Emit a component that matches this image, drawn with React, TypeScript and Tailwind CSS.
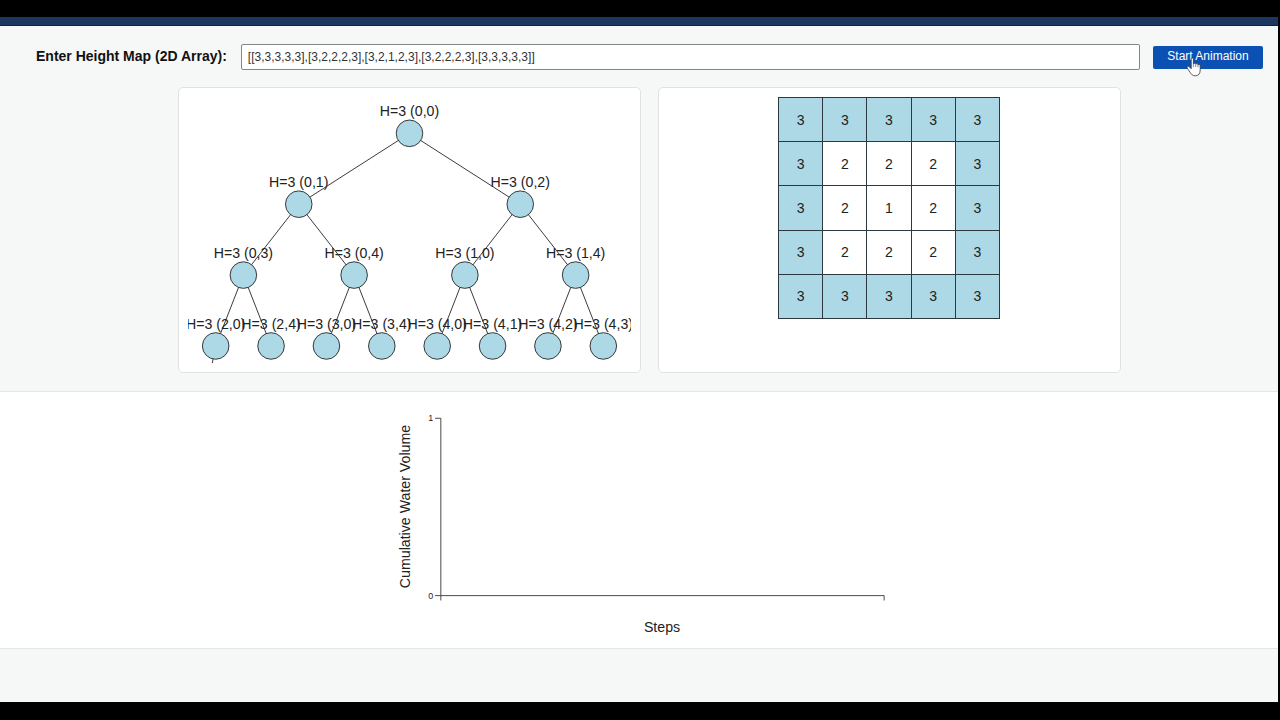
const heights = [
  [3, 3, 3, 3, 3],
  [3, 2, 2, 2, 3],
  [3, 2, 1, 2, 3],
  [3, 2, 2, 2, 3],
  [3, 3, 3, 3, 3],
];

// Border cells in the order in which they sit in the heap array.
const heap = [
  "0,0", "0,1", "0,2", "0,3", "0,4", "1,0", "1,4", "2,0",
  "2,4", "3,0", "3,4", "4,0", "4,1", "4,2", "4,3", "4,4",
];

const TREE_WIDTH = 500;

function nodePosition(index: number) {
  const level = Math.floor(Math.log2(index + 1));
  const slot = index + 1 - 2 ** level;
  return {
    x: (TREE_WIDTH / 2 ** (level + 1)) * (2 * slot + 1),
    y: 41 + level * 80,
  };
}

function HeapTree() {
  const nodes = heap.map((cell, index) => ({ cell, ...nodePosition(index) }));
  return (
    <svg viewBox="0 0 500 300" className="block w-full" role="img" aria-label="Heap">
      {nodes.slice(1).map((node, i) => {
        const parent = nodes[Math.floor(i / 2)];
        return (
          <line key={node.cell} x1={parent.x} y1={parent.y} x2={node.x} y2={node.y} stroke="#222" />
        );
      })}
      {nodes.map((node) => (
        <g key={node.cell}>
          <circle cx={node.x} cy={node.y} r={15} fill="#add8e6" stroke="#222" />
          {node.y < 300 && (
            <text x={node.x} y={node.y - 19} textAnchor="middle" fontSize={16} fill="#222">
              {`H=3 (${node.cell})`}
            </text>
          )}
        </g>
      ))}
    </svg>
  );
}

function HeightGrid() {
  return (
    <table className="mx-auto h-[222px] w-[222px] table-fixed border-collapse text-center text-sm text-[#222]">
      <tbody>
        {heights.map((row, r) => (
          <tr key={r}>
            {row.map((h, c) => {
              const edge = r === 0 || c === 0 || r === heights.length - 1 || c === row.length - 1;
              return (
                <td
                  key={c}
                  className={edge ? "border border-[#2c3a40] bg-[#add8e6] p-0" : "border border-[#2c3a40] bg-white p-0"}
                >
                  {h}
                </td>
              );
            })}
          </tr>
        ))}
      </tbody>
    </table>
  );
}

function VolumeChart() {
  return (
    <svg viewBox="0 0 600 270" className="mx-auto block w-full max-w-[532px]" role="img" aria-label="Cumulative water volume by step">
      <g transform="translate(76 19)" fill="none" stroke="#333">
        <path d="M-6 0.5H0.5V200.5H-6" />
        <path d="M0.5 206V200.5H500.5V206" />
      </g>
      <g fill="#222">
        <text x={68} y={23} textAnchor="end" fontSize={10}>1</text>
        <text x={68} y={223} textAnchor="end" fontSize={10}>0</text>
        <text x={326} y={260} textAnchor="middle" fontSize={16}>Steps</text>
        <text transform="translate(42 119) rotate(-90)" textAnchor="middle" fontSize={16}>
          Cumulative Water Volume
        </text>
      </g>
    </svg>
  );
}

function HandPointer() {
  return (
    <svg
      viewBox="0 0 16 20"
      className="pointer-events-none absolute top-[11px] left-[33px] h-5 w-4"
      aria-hidden="true"
    >
      <path
        d="M5.2 10.5V2.2C5.2 0.6 7.4 0.6 7.4 2.2V6.9C7.7 5.8 9.6 6 9.7 7.2C10.2 6.2 12 6.5 12 7.8C12.6 7 14.2 7.4 14.2 8.8V13C14.2 16.7 12.5 18.8 9.3 18.8C6.6 18.8 5.4 17.5 4.1 15.3L1.3 11.2C0.6 9.9 2 8.8 3.2 9.7L5.2 11.8Z"
        fill="#fff"
        stroke="#333"
        strokeWidth={0.8}
        strokeLinejoin="round"
      />
      <path d="M7.4 7V10M9.7 7.4V10M12 8V10.3" stroke="#555" strokeWidth={0.7} fill="none" />
    </svg>
  );
}

export default function App() {
  return (
    <div className="flex min-h-screen flex-col bg-black font-['Liberation_Sans',Arial,sans-serif] text-[#111]">
      <div className="mt-[17px] mr-[2px] mb-[18px] flex grow flex-col bg-[#f6f8f8]">
        <header className="h-[9px] border-b border-[#0c1f45] bg-[#1b365f]" />
        <main>
          <section className="border-b border-[#e4e6e8] pb-[18px]">
            <form className="flex items-center pt-[18px] pr-[15px] pl-9" onSubmit={(e) => e.preventDefault()}>
              <label htmlFor="height-map" className="mr-[14px] pb-[2px] text-sm leading-5 font-bold">
                Enter Height Map (2D Array):
              </label>
              <input
                id="height-map"
                type="text"
                defaultValue="[[3,3,3,3,3],[3,2,2,2,3],[3,2,1,2,3],[3,2,2,2,3],[3,3,3,3,3]]"
                className="mr-[13px] h-[26px] min-w-0 grow rounded-[2px] border border-[#858585] bg-white px-[6px] text-xs text-[#333]"
              />
              <div className="relative">
                <button type="submit" className="block h-[23px] w-[110px] rounded-[2px] bg-[#0b51b3] pb-[2px] text-xs whitespace-nowrap text-white">
                  Start Animation
                </button>
                <HandPointer />
              </div>
            </form>
            <div className="pt-[17px] pl-5">
              <div className="mx-auto grid max-w-[943px] grid-cols-2 gap-[17px]">
                <div className="rounded-[5px] border border-[#e0e3e6] bg-white p-[9px]">
                  <HeapTree />
                </div>
                <div className="rounded-[5px] border border-[#e0e3e6] bg-white p-[9px]">
                  <HeightGrid />
                </div>
              </div>
            </div>
          </section>
          <section className="border-b border-[#e4e6e8] bg-white pt-[9px] pb-2">
            <VolumeChart />
          </section>
        </main>
      </div>
    </div>
  );
}
